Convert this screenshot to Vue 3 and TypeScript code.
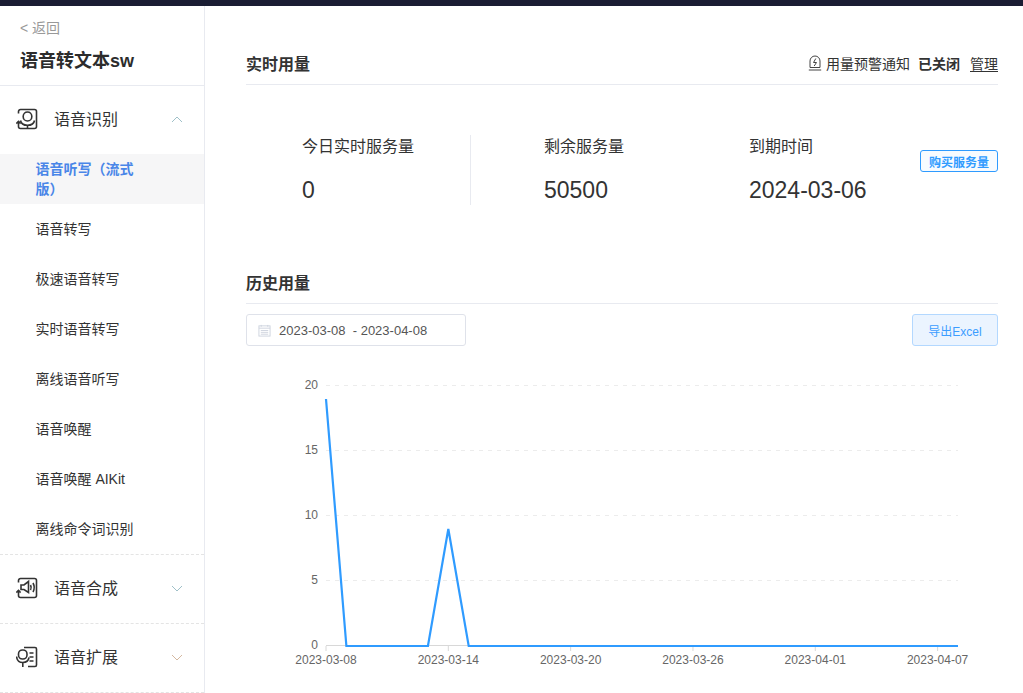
<script setup lang="ts">
const subItems = ['语音转写', '极速语音转写', '实时语音转写', '离线语音听写', '语音唤醒', '语音唤醒 AIKit', '离线命令词识别']

const plotLeft = 326
const plotRight = 958
const zeroY = 646
const stepX = (plotRight - plotLeft) / 31
const stepY = 13

const values: number[] = Array.from({ length: 32 }, () => 0)
values[0] = 19
values[6] = 9

const linePoints = values.map((v, i) => `${plotLeft + i * stepX},${zeroY - v * stepY}`).join(' ')
const yTicks = [0, 5, 10, 15, 20].map((v) => ({ v, y: zeroY - v * stepY }))
const xTicks = ['2023-03-08', '2023-03-14', '2023-03-20', '2023-03-26', '2023-04-01', '2023-04-07'].map((label, i) => ({
  label,
  x: plotLeft + i * 6 * stepX,
}))
// svg starts under the toolbar, so page y is shifted by this
const chartTop = 346
</script>

<template>
  <div class="page">
    <div class="topbar"></div>
    <div class="body">
      <aside class="side">
        <div class="side-head">
          <div class="back">&lt; 返回</div>
          <div class="app-name">语音转文本sw</div>
        </div>

        <div class="group">
          <div class="group-head">
            <svg class="g-icon" viewBox="0 0 22 22" fill="none" stroke="#333" stroke-width="1.6">
              <path d="M2.500 5.500V3.500A2 2 0 0 1 4.500 1.500h14a2 2 0 0 1 2 2v15a2 2 0 0 1-2 2h-14a2 2 0 0 1-2-2v-5" />
              <rect x="7.200" y="4" width="8.600" height="9" rx="4.300" />
              <path d="M4.500 12.500c.5 3 3 4.800 7 4.800s6.500-1.800 7-4.800M11.500 17.300v3.200" />
              <path d="M.4 15.600l2.100-2.100 2.100 2.100" />
            </svg>
            <span class="g-name">语音识别</span>
            <svg class="chev" viewBox="0 0 12 7" fill="none" stroke="#9fc0c8" stroke-width="1"><path d="M1 6l5-5 5 5" /></svg>
          </div>
          <div class="item active"><span>语音听写（流式版）</span></div>
          <div v-for="s in subItems" :key="s" class="item">{{ s }}</div>
        </div>

        <div class="group">
          <div class="group-head">
            <svg class="g-icon" viewBox="0 0 22 22" fill="none" stroke="#333" stroke-width="1.6">
              <path d="M2.500 5.500V3.500A2 2 0 0 1 4.500 1.500h14a2 2 0 0 1 2 2v15a2 2 0 0 1-2 2h-14a2 2 0 0 1-2-2v-5" />
              <path d="M5 8h3l4.500-3.500v11L8 12.500H5z" />
              <path d="M14.500 8c.8 1.500.8 3.500 0 5M17 6c1.500 2.800 1.500 6.200 0 9" />
              <path d="M.4 15.600l2.100-2.100 2.100 2.100" />
            </svg>
            <span class="g-name">语音合成</span>
            <svg class="chev" viewBox="0 0 12 7" fill="none" stroke="#9fc0c8" stroke-width="1"><path d="M1 1l5 5 5-5" /></svg>
          </div>
        </div>

        <div class="group">
          <div class="group-head">
            <svg class="g-icon" viewBox="0 0 22 22" fill="none" stroke="#333" stroke-width="1.6">
              <path d="M8 1.500h11a1.500 1.500 0 0 1 1.500 1.500v16a1.500 1.500 0 0 1-1.500 1.500h-7" />
              <rect x="2.500" y="4" width="8.500" height="9" rx="4" />
              <path d="M.6 10.500c.3 4 3 6 6.200 6s5.700-2 6.200-5M6.800 16.500v4.500" />
              <path d="M13.500 7h4M13.500 11h4M13.500 15h4" />
            </svg>
            <span class="g-name">语音扩展</span>
            <svg class="chev" viewBox="0 0 12 7" fill="none" stroke="#d4b8a0" stroke-width="1"><path d="M1 1l5 5 5-5" /></svg>
          </div>
        </div>
      </aside>

      <main class="main">
        <section class="head-row first">
          <h2>实时用量</h2>
          <div class="notice">
            <svg class="bell" viewBox="0 0 14 16" fill="none" stroke="#444" stroke-width="1">
              <path d="M2 12.500V6a5 5 0 0 1 10 0v6.500z" />
              <path d="M7.800 3.500L5.500 7.500h3L6.200 11" />
              <path d="M.8 15h12.400" />
            </svg>
            <span>用量预警通知</span>
            <b>已关闭</b>
            <a>管理</a>
          </div>
        </section>

        <section class="stats">
          <div class="stat s1">
            <div class="s-label">今日实时服务量</div>
            <div class="s-value">0</div>
          </div>
          <div class="stat s2">
            <div class="s-label">剩余服务量</div>
            <div class="s-value">50500</div>
          </div>
          <div class="stat s3">
            <div class="s-label">到期时间</div>
            <div class="s-value">2024-03-06</div>
          </div>
          <button class="buy">购买服务量</button>
        </section>

        <section class="head-row second">
          <h2>历史用量</h2>
        </section>

        <div class="toolbar">
          <div class="picker">
            <svg class="cal" viewBox="0 0 14 14" fill="none" stroke="#cdd3de" stroke-width="1">
              <rect x="1" y="2" width="12" height="11" />
              <path d="M1 4.500h12M3.500 1v2M10.500 1v2M3 7h8M3 9h8M3 11h8" />
            </svg>
            <span>2023-03-08 &nbsp;- 2023-04-08</span>
          </div>
          <button class="export">导出Excel</button>
        </div>

        <svg class="chart" width="818" height="347" :viewBox="`205 ${chartTop} 818 347`">
          <g v-for="t in yTicks" :key="t.v">
            <line v-if="t.v > 0" :x1="plotLeft" :x2="plotRight" :y1="t.y - 0.5" :y2="t.y - 0.5" stroke="#ececec" stroke-dasharray="4 5" />
            <text :x="plotLeft - 8" :y="t.y + 3" text-anchor="end" class="tick">{{ t.v }}</text>
          </g>
          <line :x1="plotLeft" :x2="plotRight" :y1="zeroY - 0.5" :y2="zeroY - 0.5" stroke="#d8d8d8" />
          <g v-for="t in xTicks" :key="t.label">
            <line :x1="t.x" :x2="t.x" :y1="zeroY" :y2="zeroY + 5" stroke="#d8d8d8" />
            <text :x="t.x" :y="zeroY + 18" text-anchor="middle" class="tick">{{ t.label }}</text>
          </g>
          <polyline :points="linePoints" fill="none" stroke="#2f9bff" stroke-width="2.2" />
        </svg>
      </main>
    </div>
  </div>
</template>

<style>
html, body {
  margin: 0;
  overflow: hidden;
  background: #fff;
}
</style>

<style scoped>
.page {
  width: 1023px;
  height: 693px;
  overflow: hidden;
  font-family: "Liberation Sans", "Noto Sans CJK SC", sans-serif;
  color: #333;
}

.topbar {
  height: 6px;
  background: #1a1d33;
}

.body {
  display: flex;
}

.side {
  width: 204px;
  flex: none;
  border-right: 1px solid #e8eaf0;
  height: 687px;
}

.side-head {
  height: 80px;
  box-sizing: border-box;
  padding: 13px 0 0 20px;
  border-bottom: 1px solid #e8eaf0;
}

.back {
  font-size: 14px;
  line-height: 18px;
  color: #999;
}

.app-name {
  margin-top: 11px;
  font-size: 18px;
  line-height: 26px;
  font-weight: 700;
  color: #2c2c2c;
}

.group {
  border-bottom: 1px dashed #e4e4e4;
}

.group-head {
  height: 68px;
  box-sizing: border-box;
  padding: 0 0 2px 16px;
  display: flex;
  align-items: center;
}

.g-icon {
  width: 22px;
  height: 22px;
  flex: none;
}

.g-name {
  margin: 0 0 2px 16px;
  font-size: 16px;
  color: #333;
  flex: 1;
}

.chev {
  width: 12px;
  height: 7px;
  margin-right: 21px;
}

.item {
  height: 50px;
  display: flex;
  align-items: center;
  padding: 0 60px 0 35.5px;
  font-size: 14px;
  line-height: 20px;
  color: #333;
}

.item.active {
  background: #f6f6f7;
  color: #4a86e8;
  font-weight: 700;
}

.main {
  flex: 1;
  padding: 0 25px 0 41px;
  min-width: 0;
}

.head-row {
  display: flex;
  align-items: center;
  justify-content: space-between;
  border-bottom: 1px solid #e8eaf0;
  height: 38px;
  box-sizing: border-box;
  padding-bottom: 6px;
}

.first {
  margin-top: 41px;
}

.second {
  margin-top: 61px;
}

h2 {
  margin: 0;
  font-size: 16px;
  font-weight: 700;
  color: #333;
}

.notice {
  display: flex;
  align-items: center;
  font-size: 14px;
  color: #333;
}

.bell {
  width: 14px;
  height: 16px;
  margin-right: 4px;
}

.notice b {
  margin-left: 8px;
  color: #333;
}

.notice a {
  margin-left: 10px;
  text-decoration: underline;
  text-decoration-skip-ink: none;
  text-underline-offset: 2px;
}

.stats {
  height: 70px;
  margin-top: 50px;
  display: flex;
  align-items: stretch;
}

.stat {
  flex: none;
}

.s1 {
  width: 168px;
  margin-left: 56px;
  border-right: 1px solid #e8eaf0;
}

.s2 {
  width: 205px;
  margin-left: 73px;
}

.s3 {
  width: 171px;
}

.s-label {
  padding-top: 1px;
  font-size: 16px;
  line-height: 22px;
}

.s-value {
  margin-top: 18px;
  font-size: 23px;
  line-height: 28px;
  color: #333;
}

.buy {
  align-self: flex-start;
  margin-top: 15px;
  width: 78px;
  height: 22px;
  padding: 0;
  box-sizing: border-box;
  border: 1px solid #2f9bff;
  border-radius: 3px;
  background: #f7fbff;
  color: #2f9bff;
  font: 700 12px "Liberation Sans", "Noto Sans CJK SC", sans-serif;
}

.toolbar {
  display: flex;
  justify-content: space-between;
  margin-top: 10px;
}

.picker {
  width: 220px;
  height: 32px;
  box-sizing: border-box;
  border: 1px solid #dfe2ea;
  border-radius: 3px;
  display: flex;
  align-items: center;
  padding-left: 11px;
  font-size: 13px;
  color: #555;
}

.cal {
  width: 13px;
  height: 13px;
  margin-right: 8px;
}

.export {
  width: 86px;
  height: 32px;
  padding: 0;
  box-sizing: border-box;
  border: 1px solid #b3d8ff;
  border-radius: 3px;
  background: #ebf4ff;
  color: #3c9dff;
  font: 12px "Liberation Sans", "Noto Sans CJK SC", sans-serif;
}

.chart {
  display: block;
  margin-left: -41px;
}

.tick {
  font-size: 12px;
  fill: #666;
  font-family: "Liberation Sans", sans-serif;
}
</style>
